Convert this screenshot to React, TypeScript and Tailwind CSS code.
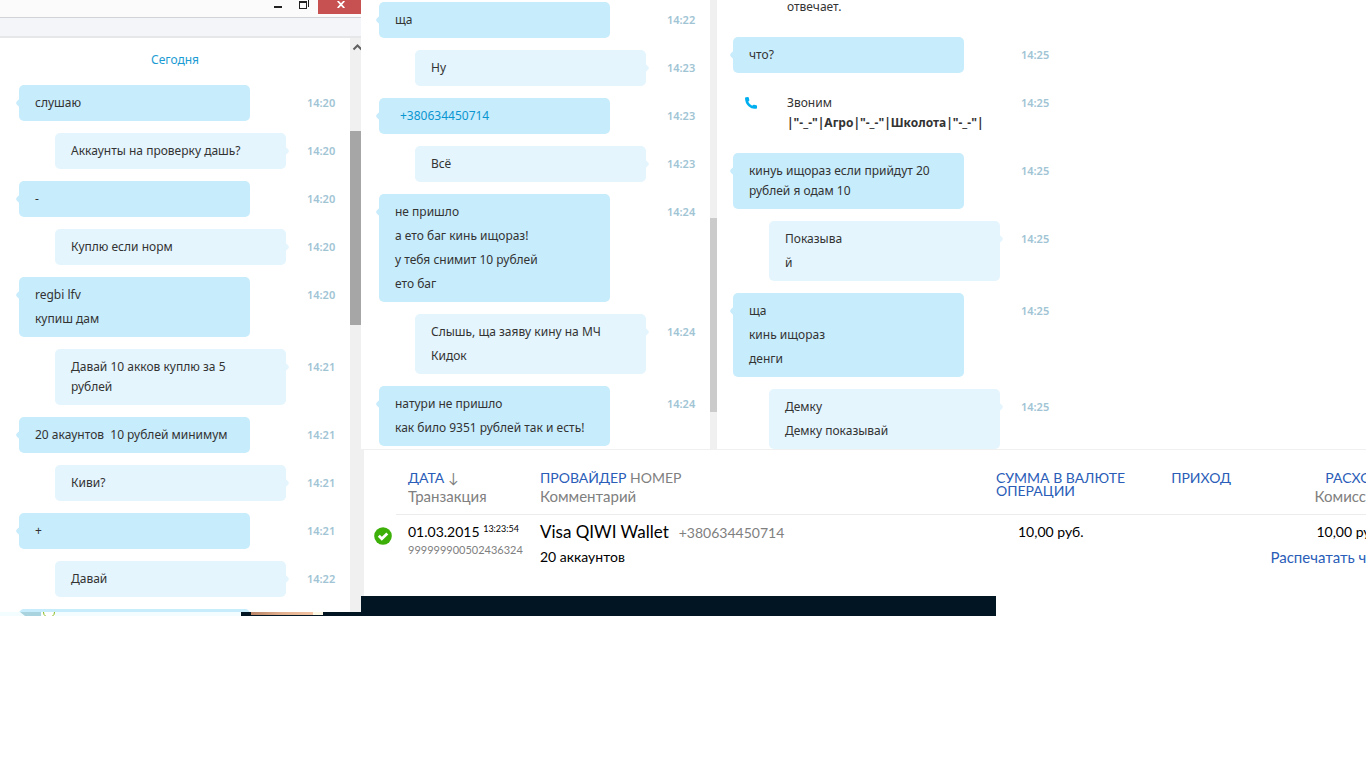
import type { ReactNode } from 'react';
import clsx from 'clsx';

type Message = { from: 'them' | 'me'; lines: ReactNode[]; time?: string };

const firstChat: Message[] = [
  { from: 'them', lines: ['слушаю'], time: '14:20' },
  { from: 'me', lines: ['Аккаунты на проверку дашь?'], time: '14:20' },
  { from: 'them', lines: ['-'], time: '14:20' },
  { from: 'me', lines: ['Куплю если норм'], time: '14:20' },
  { from: 'them', lines: ['regbi lfv', 'купиш дам'], time: '14:20' },
  { from: 'me', lines: ['Давай 10 акков куплю за 5 рублей'], time: '14:21' },
  { from: 'them', lines: ['20 акаунтов  10 рублей минимум'], time: '14:21' },
  { from: 'me', lines: ['Киви?'], time: '14:21' },
  { from: 'them', lines: ['+'], time: '14:21' },
  { from: 'me', lines: ['Давай'], time: '14:22' },
  { from: 'them', lines: [] },
];

const secondChat: Message[] = [
  { from: 'them', lines: ['ща'], time: '14:22' },
  { from: 'me', lines: ['Ну'], time: '14:23' },
  { from: 'them', lines: [<a href="tel:+380634450714" className="ml-[5px] text-[#0a96d1]">+380634450714</a>], time: '14:23' },
  { from: 'me', lines: ['Всё'], time: '14:23' },
  { from: 'them', lines: ['не пришло', 'а ето баг кинь ищораз!', 'у тебя снимит 10 рублей', 'ето баг'], time: '14:24' },
  { from: 'me', lines: ['Слышь, ща заяву кину на МЧ', 'Кидок'], time: '14:24' },
  { from: 'them', lines: ['натури не пришло', 'как било 9351 рублей так и есть!'], time: '14:24' },
];

const thirdChat: Message[] = [
  { from: 'them', lines: ['кинуь ищораз если прийдут 20 рублей я одам 10'], time: '14:25' },
  { from: 'me', lines: ['Показыва', 'й'], time: '14:25' },
  { from: 'them', lines: ['ща', 'кинь ищораз', 'денги'], time: '14:25' },
  { from: 'me', lines: ['Демку', 'Демку показывай'], time: '14:25' },
];

function Time({ children }: { children: ReactNode }) {
  return <time className="mt-2 text-[11px] leading-5 font-semibold text-[#a0c4d4]">{children}</time>;
}

function Bubble({ from, lines, time }: Message) {
  const mine = from === 'me';
  return (
    <li className="flex items-start">
      <div className="w-72 shrink-0">
        <div className={clsx('relative flex min-h-9 w-[231px] flex-col gap-1 rounded-[5px] py-2 pr-5 pl-4', mine ? 'ml-9 bg-[#e4f5fd]' : 'bg-[#c7ecfc]')}>
          <span className={clsx('absolute top-3.5 size-2 rotate-45 rounded-[2px]', mine ? '-right-0.5 bg-[#e4f5fd]' : '-left-0.5 bg-[#c7ecfc]')} />
          {lines.map((line, i) => (
            <p key={i} className="whitespace-pre-wrap">{line}</p>
          ))}
        </div>
      </div>
      {time && <Time>{time}</Time>}
    </li>
  );
}

function Messages({ items }: { items: Message[] }) {
  return (
    <ul className="flex flex-col gap-3">
      {items.map((m, i) => <Bubble key={i} {...m} />)}
    </ul>
  );
}

function TitleBar() {
  return (
    <header>
      <div className="flex h-[18px] items-start justify-end border-b border-[#d0d3d8] bg-[#fbfbfb]">
        <button aria-label="Свернуть" className="flex h-3.5 w-6 justify-center pt-1.5">
          <svg width="8" height="2"><path d="M0 0h8v2H0z" fill="#222" /></svg>
        </button>
        <button aria-label="Развернуть" className="flex h-3.5 w-7 justify-center">
          <svg width="10" height="9" shapeRendering="crispEdges">
            <path d="M0 1h8v8H0zM1 3v5h6V3zM9 0h1v7H9z" fill="#222" fillRule="evenodd" />
          </svg>
        </button>
        <button aria-label="Закрыть" className="flex h-3.5 w-[43px] justify-center bg-[#c75050] pt-px pl-0.5">
          <svg width="8" height="7"><path d="M.7 0l6.6 7M7.3 0L.7 7" stroke="#fff" strokeWidth="1.8" /></svg>
        </button>
      </div>
      <div className="h-5 border-b-2 border-[#e6e7e9] bg-[#f4f5f8]" />
    </header>
  );
}

// slice of the desktop still visible under the first window
function DesktopStrip() {
  return (
    <div className="flex h-1 bg-[#f3fdff]">
      <svg width="241" height="4">
        <path d="M20 0h21v4H25z" fill="#a8d3df" />
        <path d="M42 0h13v4H42z" fill="#fff" />
        <path d="M43.500 0q0 3 2 4M54.500 0q0 3-2 4" stroke="#84b81a" fill="none" />
      </svg>
      <div className="flex flex-1 border-b border-[#021522] bg-[#021522] pl-2.5">
        <div className="w-[62px] bg-linear-to-r from-[#b98468] via-[#e2b08f] to-[#f3c3a3]" />
        <div className="w-2.5 bg-[#fdf8e4]" />
      </div>
    </div>
  );
}

function Transactions() {
  return (
    <section className="h-[147px] overflow-hidden border-t border-l-3 border-[#f0f0f0] font-['Lato',sans-serif] text-[15px] leading-[18px] text-black">
      <div className="-mr-4">
        <table className="w-full table-fixed">
          <colgroup>
            <col className="w-8" />
            <col className="w-[144px]" />
            <col />
            <col className="w-36" />
            <col className="w-[91px]" />
            <col className="w-[151px]" />
          </colgroup>
          <thead className="text-left align-top text-[14px] text-[#808080]">
            <tr className="h-16">
              <th />
              <th className="border-b border-[#ececec] pt-[19px] pl-3 font-normal">
                <a href="#date" className="text-[#2a5db8]">ДАТА</a> ↓
                <div className="text-[15px]">Транзакция</div>
              </th>
              <th className="border-b border-[#ececec] pt-[19px] font-normal">
                <a href="#provider" className="text-[#2a5db8]">ПРОВАЙДЕР</a> НОМЕР
                <div className="text-[15px]">Комментарий</div>
              </th>
              <th className="border-b border-[#ececec] pt-[21px] leading-[13px] font-normal">
                <a href="#amount" className="text-[#2a5db8]">СУММА В ВАЛЮТЕ ОПЕРАЦИИ</a>
              </th>
              <th className="border-b border-[#ececec] pt-[19px] text-right font-normal">
                <a href="#income" className="text-[#2a5db8]">ПРИХОД</a>
              </th>
              <th className="border-b border-[#ececec] pt-[19px] text-right font-normal">
                <a href="#expense" className="text-[#2a5db8]">РАСХОД</a>
                <div className="text-[15px]">Комиссия</div>
              </th>
            </tr>
          </thead>
          <tbody className="align-top text-[14px]">
            <tr>
              <td className="pt-[13px] pl-2.5">
                <svg width="18" height="18" viewBox="0 0 18 18">
                  <circle cx="9" cy="9" r="8.800" fill="#3cb009" />
                  <path d="M4.800 8.800l3 3 5.500-5.300" fill="none" stroke="#fff" strokeWidth="2.800" />
                </svg>
              </td>
              <td className="pt-2 pl-3 whitespace-nowrap">
                <div>01.03.2015 <sup className="text-[9px]">13:23:54</sup></div>
                <div className="text-[11px] text-[#808080]">999999900502436324</div>
              </td>
              <td className="pt-2">
                <div className="flex items-baseline gap-2.5">
                  <span className="text-[17px]">Visa QIWI Wallet</span>
                  <span className="text-[#808080]">+380634450714</span>
                </div>
                <div className="mt-1.5">20 аккаунтов</div>
              </td>
              <td className="pt-2 pl-[22px]">10,00 руб.</td>
              <td />
              <td className="pt-2 text-right">
                <div>10,00 руб.</div>
                <a href="#receipt" className="mt-[7px] block text-[15px] text-[#2a5db8]">Распечатать чек</a>
              </td>
            </tr>
          </tbody>
        </table>
      </div>
    </section>
  );
}

export default function App() {
  return (
    <main className="flex items-start overflow-hidden bg-white font-['Noto_Sans','Open_Sans',sans-serif] text-[12px] leading-5 text-[#333]">
      <div className="w-[361px] shrink-0">
        <section className="flex h-[612px] flex-col overflow-hidden">
          <TitleBar />
          <div className="flex min-h-0 flex-1">
            <div className="min-w-0 flex-1 pt-3 pl-[19px]">
              <h2 className="mb-[15px] pr-[19px] text-center text-[#1a9bd3]">Сегодня</h2>
              <Messages items={firstChat} />
            </div>
            <div className="flex w-[11px] flex-col overflow-hidden bg-[#f0f0f0]">
              <svg width="11" height="93" className="shrink-0">
                <path d="M3.500 11.500l4-4 4 4" fill="none" stroke="#606060" strokeWidth="2" />
              </svg>
              <div className="h-[194px] bg-[#a6a6a6]" />
            </div>
          </div>
        </section>
        <DesktopStrip />
      </div>

      <div className="min-w-0 flex-1">
        <div className="flex h-[449px] overflow-hidden">
          <section className="flex w-[356px] shrink-0">
            <div className="flex-1 pt-0.5 pl-[18px]">
              <Messages items={secondChat} />
            </div>
            <div className="w-[7px] bg-[#f0f0f0] pt-[218px]">
              <div className="h-[194px] bg-[#cbcbcb]" />
            </div>
          </section>
          <section className="flex flex-1 flex-col gap-3 pl-4">
            <p className="h-[25px] shrink-0 pl-[54px] leading-[14px]">отвечает.</p>
            <Messages items={[{ from: 'them', lines: ['что?'], time: '14:25' }]} />
            <div className="flex items-start">
              <div className="flex w-72 shrink-0 items-start py-2 pl-3">
                <svg width="12" height="12" viewBox="0 0 12 12" className="mt-1 mr-[30px] shrink-0">
                  <path d="M0 1.200Q0 .3 1 .2L3 0q.6 0 .8.700l.5 2.400q.1.600-.4 1l-.7.600Q4.500 7.300 7.200 8.700l.8-.7q.4-.4 1-.3l2.300.6q.7.200.7.800v1.700q0 .8-.8.900Q7 12.500 3.500 9.200 0 5.800 0 1.200z" fill="#00aff0" />
                </svg>
                <div>
                  Звоним
                  <strong className="block whitespace-nowrap">|"-_-"|Агро|"-_-"|Школота|"-_-"|</strong>
                </div>
              </div>
              <Time>14:25</Time>
            </div>
            <Messages items={thirdChat} />
          </section>
        </div>
        <Transactions />
        <div className="h-5 w-[635px] bg-[#021522]" />
      </div>
    </main>
  );
}
